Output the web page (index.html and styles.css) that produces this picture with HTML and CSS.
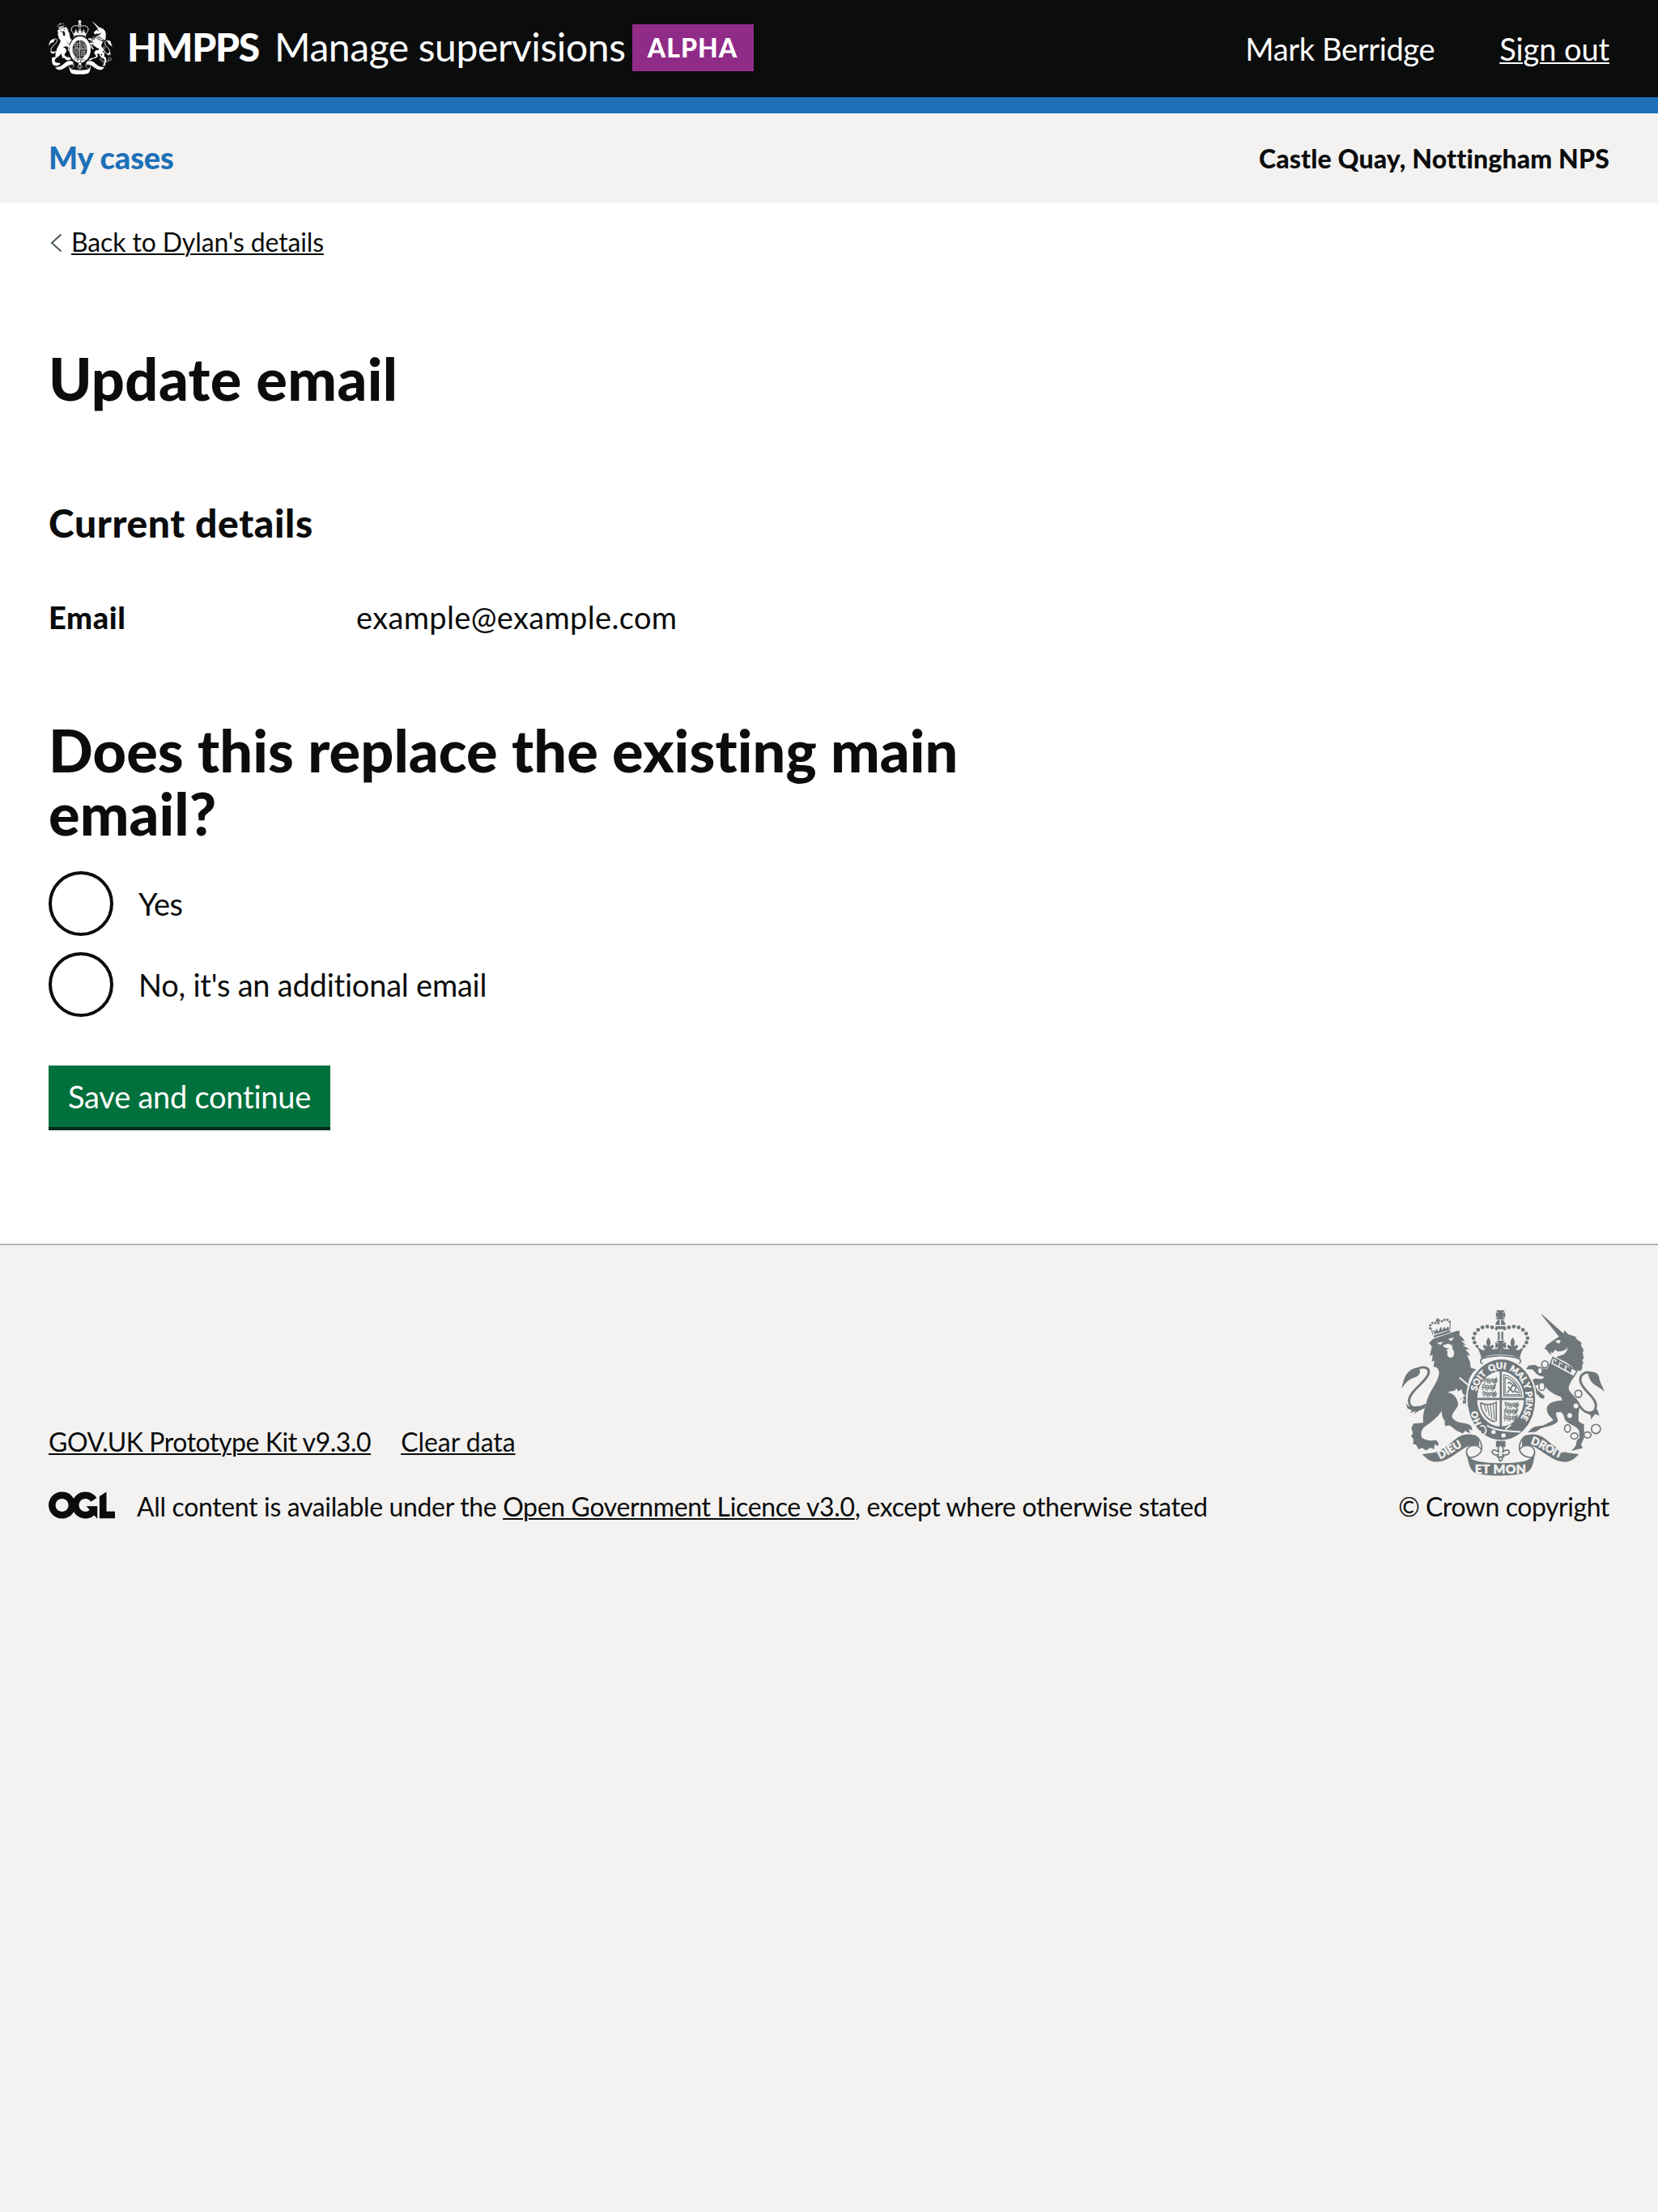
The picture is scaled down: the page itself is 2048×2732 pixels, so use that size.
FILE: index.html
```html
<!DOCTYPE html>
<html lang="en">
<head>
<meta charset="utf-8">
<title>Update email - Manage supervisions</title>
<link rel="stylesheet" href="styles.css">
</head>
<body>
<svg class="defs" aria-hidden="true">
  <defs>
    <g id="ribbon-side">
      <path d="M172 616 L215 611 C255 600 275 575 305 553 C330 538 365 540 382 556 L383 586 C360 577 340 586 325 596 C290 618 265 640 235 644 C205 648 190 635 172 616Z"/>
      <path class="line" d="M366 547 C390 560 400 595 386 612 C376 626 352 632 340 625 C330 605 338 587 362 584 C376 584 386 590 392 600"/>
    </g>
    <g id="crown-half">
      <circle cx="447" cy="152" r="6"/><circle cx="431" cy="147" r="7"/><circle cx="413" cy="144" r="7"/><circle cx="395" cy="147" r="7"/><circle cx="379" cy="156" r="7"/><circle cx="367" cy="170" r="7"/><circle cx="362" cy="187" r="7"/><circle cx="366" cy="203" r="7"/><circle cx="375" cy="217" r="6"/>
      <path d="M417 184 C405 200 410 212 415 218 L402 212 C395 214 397 224 404 226 L404 232 H430 L430 226 C438 224 440 214 432 212 L420 218 C426 210 428 198 417 184Z"/>
      <path d="M376 220 C388 226 390 230 396 231 L462 226 V248 C435 248 412 251 391 262 C388 245 384 238 376 220Z"/>
      <path class="line" d="M462 252 C435 253 412 256 393 263 C384 270 388 280 398 284"/>
    </g>
    <g id="shield-lion">
      <path class="thin" d="M0 5 l6 -5 5 5 8 -2 7 4 9 -4 8 3 6 -5 -2 8 -7 1 2 6 M5 7 l-2 7 M13 7 l4 7 M24 8 l-3 7 M32 7 l5 6"/>
    </g>
    <g id="arms">
      <!-- lion -->
      <path d="M197 205 L212 190 L300 160 L311 160 L310 176 L322 186 L330 198 L316 196 L333 212 L322 213 L348 228 L332 228 L351 252 L338 249 L349 275 L352 297 L372 302 L358 316 L345 340 L343 358 C362 385 368 395 366 412 L372 436 L362 431 L357 441 L346 434 L338 441 L332 428 L322 430 L323 417 L312 411 L321 402 L306 400 L308 392 L297 394 L300 386 L266 386 C290 392 304 410 305 434 C300 450 284 460 282 478 C292 498 312 500 334 503 C350 506 358 514 357 528 L344 523 L350 539 L330 530 L322 540 L308 533 C292 528 286 515 272 510 L258 512 C252 502 260 494 252 488 C243 475 242 455 250 440 C244 470 210 495 188 510 C166 525 165 545 172 556 C190 566 202 568 222 564 C232 570 234 578 231 586 L218 580 L216 598 L203 592 L186 603 L172 593 L158 598 L150 582 L138 578 L140 562 L131 548 L138 540 L132 520 L140 503 L176 500 C172 470 182 445 188 425 C194 395 214 370 226 345 C242 312 234 294 214 293 L217 270 L208 274 L211 248 L200 254 L208 218Z"/>
      <path class="cut" d="M226 205 L250 200 L240 212Z M268 190 L290 184 L280 198Z M247 214 L268 207 L284 214 L284 226 L290 238 C291 252 285 260 276 259 C266 258 263 248 266 238 L262 230 L272 226 L256 222Z M266 386 L294 380 L298 372 L306 384 L318 376 L322 392 L332 400 L322 406 L330 420 L318 414 L308 400 L290 394Z"/>
      <path class="cut-line" d="M310 333 L345 362 C356 376 364 388 370 400"/>
      <path class="tail" d="M166 448 C128 452 116 425 128 402 C144 368 190 346 196 316 C200 296 178 288 150 302"/>
      <path d="M96 374 C104 330 116 304 150 296 C170 300 168 320 150 330 C128 338 112 346 96 374Z M112 428 L124 440 L166 438 L188 428 L180 446 L160 456 L140 468 L148 456 L128 464 L134 454 L118 448Z"/>
      <path d="M214 177 L275 158 L277 165 L216 185Z"/>
      <path class="thin" d="M212 174 L205 150 M274 156 L276 132"/>
      <path d="M224 116 l8 -3 1 5 5 -1 1 6 -5 1 3 10 -8 2 -1 -10 -5 1 -2 -6 5 -1Z M218 172 L212 156 L222 162 L224 150 L232 162 L241 144 L247 158 L254 144 L260 154 L268 142 L272 157Z"/>
      <g><circle cx="201" cy="150" r="4.5"/><circle cx="202" cy="139" r="4.5"/><circle cx="210" cy="131" r="4.5"/><circle cx="221" cy="131" r="4.5"/><circle cx="245" cy="124" r="4.5"/><circle cx="255" cy="119" r="4.5"/><circle cx="266" cy="119" r="4.5"/><circle cx="274" cy="126" r="4.5"/></g>

      <!-- unicorn -->
      <path d="M612 99L617 100L695 170L698 158L712 172L736 180L744 184L740 188L762 204L759 212L770 232L766 240L770 262L764 268L774 288L766 278L764 300L758 308C740 310 720 284 700 274L668 258L686 250C696 250 708 240 711 220C704 232 690 237 672 236L664 230L656 242L646 236L652 248L640 242L634 232L625 226L632 213L656 196L678 181Z"/>
      <path class="cut" d="M664 198 L676 193 L685 197 L678 208Z"/>
      <path d="M644 280 L736 328 C724 344 714 360 714 375 C722 395 746 408 756 432 C752 460 748 478 752 496 L771 506 L771 556 L760 580 L766 594 L724 604 L740 586 L745 564 L754 556 L753 530 C744 512 720 508 704 494 C696 484 698 466 684 460 L668 462 C666 478 676 486 674 494 C662 512 630 514 612 520 L592 534 L562 536 L578 520 L590 514 L620 510 L658 490 C644 476 630 462 634 442 C642 424 668 418 690 418 L686 404 C660 396 632 378 626 362 L606 358 L590 362 L600 380 L626 402 L620 412 L606 406 L602 398 L586 390 L566 350 L590 336 L616 338 L624 330 L606 326 L594 318 L580 302 L556 302 L566 288 L590 286 L614 300 L636 300Z"/>
      <path class="plate" d="M656 258 L745 308 L733 329 L646 282Z"/>
      <path d="M656 280 L660 264 L667 278 L670 268 L678 266 L680 278 L676 290Z M680 292 L684 278 L690 286 L696 276 L702 288 L698 302Z M704 304 L706 290 L713 297 L720 290 L726 298 L722 316Z"/>
      <path class="tail" d="M750 430 C772 470 810 476 815 440 C818 404 762 380 757 344 C756 316 780 308 804 318"/>
      <path d="M784 314 C810 306 828 318 828 340 C834 360 844 370 845 386 C834 366 806 366 792 338Z M770 454 L792 460 L820 450 L828 474 L812 468 L796 488 L796 474Z"/>
      <g class="links"><ellipse cx="626" cy="284" rx="12" ry="13"/><ellipse cx="608" cy="307" rx="9" ry="12"/><ellipse cx="615" cy="366" rx="11" ry="15"/><circle cx="750" cy="393" r="13"/><ellipse cx="710" cy="521" rx="11" ry="14"/><ellipse cx="735" cy="549" rx="13" ry="11"/><ellipse cx="784" cy="545" rx="13" ry="11"/><circle cx="815" cy="523" r="17"/></g>
      <circle class="cut" cx="741" cy="438" r="9"/><circle class="cut" cx="718" cy="473" r="9"/>

      <!-- crown -->
      <path d="M445 84 H478 L469 96 L479 91 V111 L469 104 L478 117 H445 L454 104 L445 111 V91 L454 96Z M443 138 C446 124 452 119 459 118 V138Z M464 118 C472 119 478 124 481 138 H464Z M443 143 H481 C477 158 447 158 443 143Z M452 163 H459 V193 H452Z M465 163 H472 V193 H465Z M446 196 H478 L469 208 L482 202 V226 L470 218 L476 230 H448 L455 218 L443 226 V202 L456 208Z"/>
      <use href="#crown-half"/>
      <use href="#crown-half" transform="matrix(-1 0 0 1 924 0)"/>

      <!-- garter and shield -->
      <ellipse class="halo" cx="465" cy="415" rx="128" ry="152"/>
      <ellipse cx="465" cy="415" rx="125" ry="149"/>
      <ellipse class="plate" cx="462" cy="412" rx="89" ry="105"/>
      <path d="M459 308 H467 V517 H459Z M373 408 H551 V416 H373Z"/>
      <use href="#shield-lion" x="398" y="334"/><use href="#shield-lion" x="394" y="358"/><use href="#shield-lion" x="394" y="384"/>
      <use href="#shield-lion" x="400" y="341"/><use href="#shield-lion" x="392" y="366"/><use href="#shield-lion" x="398" y="391"/>
      <use href="#shield-lion" x="476" y="424"/><use href="#shield-lion" x="476" y="448"/><use href="#shield-lion" x="474" y="472"/>
      <use href="#shield-lion" x="480" y="431"/><use href="#shield-lion" x="474" y="455"/><use href="#shield-lion" x="474" y="480"/>
      <path class="thin" d="M474 322 V401 H541 C538 364 512 330 474 322Z M479 332 V396 H534 C528 362 505 340 479 332Z"/>
      <path class="line" d="M486 390 L498 376 L490 366 M498 376 L508 360 L496 350 L488 354 M508 360 L520 368 L514 384 L528 388 M510 352 L518 360 M498 376 L510 388"/>
      <path class="line" d="M388 426 C405 436 430 434 446 424 V494 M388 426 C390 462 412 490 442 496"/>
      <path class="thin" d="M402 433 L410 460 M413 434 L421 474 M424 433 L430 484 M435 430 L439 488"/>
      <path class="strap" d="M388 514 C402 502 414 528 404 540 C398 548 386 540 388 530"/>
      <path class="cut-line" d="M412 510 C440 530 490 530 536 534 M480 524 L500 508"/>
      <circle class="cut" cx="436" cy="534" r="8"/><circle class="cut" cx="473" cy="547" r="8"/>

      <!-- ribbon -->
      <use href="#ribbon-side"/>
      <use href="#ribbon-side" transform="matrix(-1 0 0 1 924 0)"/>
      <path d="M335 604 C346 632 358 638 382 643 C435 652 495 652 545 643 C570 638 580 628 589 604 C586 650 578 676 556 685 C500 699 428 699 372 687 C346 678 342 640 335 604Z"/>
      <path d="M445 567 H480 V590 H445Z"/>
      <path class="plate" d="M462 580 C450 592 452 602 456 610 C446 598 430 598 431 608 C432 620 446 620 454 618 L450 626 H474 L470 618 C480 620 494 620 494 608 C494 598 478 598 469 610 C474 602 474 592 462 580Z"/>
      <path class="plate" d="M455 628 H470 L467 638 L462 642 L457 638Z"/>
    </g>
    <path id="garter-arc" d="M392 484 A93 112 0 1 1 518 504"/>
    <path id="garter-ho" d="M398 512 Q374 480 373 420"/>
    <path id="dieu-line" d="M238 635 C270 620 300 596 360 568"/>
    <path id="droit-line" d="M572 578 C612 588 645 620 712 644"/>
  </defs>
</svg>

<header class="header">
  <a class="brand">
    <svg class="brand-crest" viewBox="95 83 752 614" preserveAspectRatio="none" aria-hidden="true"><use href="#arms"/></svg>
    <strong class="brand-org">HMPPS</strong>
    <span class="brand-service">Manage supervisions</span>
    <strong class="phase-tag">ALPHA</strong>
  </a>
  <nav class="account">
    <span class="account-name">Mark Berridge</span>
    <a class="link account-link">Sign out</a>
  </nav>
</header>

<nav class="subnav">
  <a class="subnav-link">My cases</a>
  <strong class="subnav-place">Castle Quay, Nottingham NPS</strong>
</nav>

<main class="main">
  <div class="back">
    <svg class="back-arrow" viewBox="0 0 14 22" aria-hidden="true"><path d="M13.5 .5 L2 11 L13.5 21.5"/></svg>
    <a class="link back-link">Back to Dylan's details</a>
  </div>
  <h1 class="title">Update email</h1>
  <h2 class="subtitle">Current details</h2>
  <dl class="summary">
    <dt class="summary-key">Email</dt>
    <dd class="summary-value">example@example.com</dd>
  </dl>
  <form class="form">
    <h2 class="question">Does this replace the existing main email?</h2>
    <div class="radios">
      <label class="radio"><span class="radio-ring"></span><span class="label-yes">Yes</span></label>
      <label class="radio"><span class="radio-ring"></span><span class="label-no">No, it's an additional email</span></label>
    </div>
    <button class="button" type="button">Save and continue</button>
  </form>
</main>

<footer class="footer">
  <div class="footer-meta">
    <div class="footer-links">
      <a class="link footer-kit">GOV.UK Prototype Kit v9.3.0</a>
      <a class="link footer-clear">Clear data</a>
    </div>
    <div class="licence">
      <svg class="ogl" viewBox="0 0 483.2 195.7" role="img" aria-label="Open Government Licence"><path d="M421.5 142.8V.1l-50.7 32.3v161.1h112.4v-50.7zm-122.3-9.6A47.12 47.12 0 0 1 221 97.8c0-26 21.1-47.1 47.1-47.1 16.7 0 31.4 8.7 39.7 21.8l42.7-27.2A97.63 97.63 0 0 0 268.1 0c-36.5 0-68.3 20.1-85.1 49.7A98 98 0 0 0 97.8 0C43.9 0 0 43.9 0 97.8s43.9 97.8 97.8 97.8c36.5 0 68.3-20.1 85.1-49.7a97.76 97.76 0 0 0 149.6 25.4l19.4 22.2h3v-87.8h-80l24.3 27.5zM97.8 145c-26 0-47.1-21.1-47.1-47.1s21.1-47.1 47.1-47.1 47.1 21.1 47.1 47.1-21.2 47.1-47.1 47.1"/></svg>
      <span class="licence-text">All content is available under the <a class="link">Open Government Licence v3.0</a>, except where otherwise stated</span>
    </div>
  </div>
  <div class="copyright">
    <svg class="footer-crest" viewBox="95 83 752 614" aria-hidden="true">
      <use href="#arms"/>
      <g class="motto">
        <text><textPath href="#garter-ho" startOffset="10">HO</textPath></text>
        <text><textPath href="#garter-arc" startOffset="104">SOIT</textPath></text>
        <text><textPath href="#garter-arc" startOffset="192">QUI</textPath></text>
        <text><textPath href="#garter-arc" startOffset="266">MAL</textPath></text>
        <text><textPath href="#garter-arc" startOffset="340">Y</textPath></text>
        <text><textPath href="#garter-arc" startOffset="370">PENSE</textPath></text>
        <text class="motto-large"><textPath href="#dieu-line">DIEU</textPath></text>
        <text class="motto-large"><textPath href="#droit-line">DROIT</textPath></text>
        <text class="motto-wide" x="462" y="688" text-anchor="middle">ET MON</text>
      </g>
    </svg>
    <span class="copyright-text">© Crown copyright</span>
  </div>
</footer>
</body>
</html>
```
FILE: styles.css
```css
* { box-sizing: border-box; }

body {
  margin: 0;
  min-height: 2732px;
  display: flex;
  flex-direction: column;
  background: #f3f2f1;
  color: #0b0c0c;
  font-family: Lato, "Open Sans", sans-serif;
  font-size: 38px;
  font-variant-ligatures: none;
}

h1, h2, dl, dd { margin: 0; }

.defs { display: block; width: 0; height: 0; position: absolute; }

.link {
  text-decoration: underline;
  text-decoration-thickness: 2px;
  text-underline-offset: 2px;
}

/* Royal arms */
.line, .tail, .thin, .cut-line, .strap { fill: none; stroke: currentColor; stroke-width: 5; }
.thin { stroke-width: 3.5; }
.tail { stroke-width: 9; }
.cut-line { stroke: var(--ground); stroke-width: 6; }
.cut { fill: var(--ground); }
.halo { fill: none; stroke: var(--ground); stroke-width: 6; }
.plate { fill: var(--ground); stroke: currentColor; stroke-width: 5; }
.strap { fill: currentColor; stroke: var(--ground); stroke-width: 5; }
.links { fill: var(--ground); stroke: currentColor; stroke-width: 5; }

/* Header */
.header {
  height: 140px;
  padding: 0 60px;
  display: flex;
  justify-content: space-between;
  background: #0b0c0c;
  border-bottom: 20px solid #1d70b8;
  color: #fff;
}

.brand {
  height: 116px;
  display: flex;
  align-items: center;
  font-size: 48px;
  line-height: 60px;
}

.brand-crest {
  --ground: #0b0c0c;
  width: 79px;
  height: 67px;
  margin-right: 18px;
  fill: currentColor;
}

.brand-org { font-weight: 900; letter-spacing: -1.3px; margin-right: 19px; }
.brand-service { letter-spacing: -0.4px; }

.phase-tag {
  height: 58px;
  width: 150px;
  margin: 2px 0 0 8px;
  background: #912b88;
  font-size: 32px;
  font-weight: 900;
  line-height: 57px;
  letter-spacing: 1px;
  text-align: center;
}

.account {
  height: 119px;
  display: flex;
  align-items: center;
  gap: 80px;
}

.account-name { letter-spacing: -0.35px; }
.account-link { letter-spacing: -0.1px; }

/* Sub navigation */
.subnav {
  height: 110px;
  padding: 0 60px;
  display: flex;
  align-items: center;
  justify-content: space-between;
}

.subnav-link {
  padding-bottom: 3px;
  color: #1d70b8;
  font-weight: 900;
  letter-spacing: -0.15px;
}

.subnav-place { font-size: 32px; font-weight: 900; letter-spacing: 0.15px; padding-top: 1px; }

/* Main */
.main {
  height: 1286px;
  padding: 29px 60px 0;
  background: #fff;
}

.back {
  display: flex;
  align-items: center;
  gap: 12px;
  height: 40px;
  font-size: 32px;
  line-height: 40px;
}

.back-arrow {
  width: 14px;
  height: 22px;
  margin: 2px 0 0 2px;
  fill: none;
  stroke: #505a5f;
  stroke-width: 2;
}

.back-link { letter-spacing: -0.13px; }

.title, .question { font-size: 72px; font-weight: 900; }
.title { margin-top: 108px; line-height: 80px; letter-spacing: 0.4px; }
.subtitle { margin-top: 109px; font-size: 48px; font-weight: 900; line-height: 60px; letter-spacing: 0.6px; }

.summary {
  margin-top: 61px;
  display: grid;
  grid-template-columns: 380px 1fr;
  line-height: 50px;
}

.summary-key { font-weight: 900; letter-spacing: 0.6px; }
.summary-value { letter-spacing: 0.35px; }

.form { margin-top: 100px; width: 1280px; }
.question { width: 1200px; line-height: 78px; letter-spacing: 0.1px; }

.radios { margin-top: 33px; display: grid; gap: 20px; }
.radio { display: flex; align-items: center; gap: 31px; height: 80px; }
.radio-ring { width: 80px; height: 80px; border: 4px solid #0b0c0c; border-radius: 50%; }
.label-yes { letter-spacing: -0.6px; }
.label-no { letter-spacing: -0.22px; }

.button {
  display: block;
  width: 348px;
  height: 76px;
  margin-top: 60px;
  padding: 0 0 1px;
  border: 0;
  background: #00703c;
  box-shadow: 0 4px 0 #002d18;
  color: #fff;
  font: inherit;
  letter-spacing: -0.25px;
}

/* Footer */
.footer {
  height: 345px;
  padding: 0 60px;
  border-top: 2px solid #b1b4b6;
  display: flex;
  justify-content: space-between;
  align-items: flex-end;
  font-size: 32px;
  line-height: 40px;
}

.footer-links { display: flex; gap: 37px; margin-bottom: 40px; }
.footer-kit { letter-spacing: -0.46px; }
.footer-clear { letter-spacing: -0.05px; }

.licence { display: flex; align-items: center; gap: 27px; height: 40px; }
.ogl { width: 82px; height: 34px; margin-top: -4px; fill: #0b0c0c; }
.licence-text { letter-spacing: -0.35px; }

.copyright { display: flex; flex-direction: column; align-items: center; width: 261px; }

.footer-crest {
  --ground: #f3f2f1;
  width: 251px;
  height: 205px;
  margin: 0 0 18px -2px;
  color: #6f777b;
  fill: currentColor;
}

.motto {
  fill: var(--ground);
  stroke: var(--ground);
  stroke-width: 1.5;
  font-family: Lato, sans-serif;
  font-size: 33px;
  font-weight: 900;
}

.motto-large { font-size: 40px; }
.motto-wide { font-size: 47px; letter-spacing: 1px; }

.copyright-text { letter-spacing: -0.45px; white-space: nowrap; }
```
